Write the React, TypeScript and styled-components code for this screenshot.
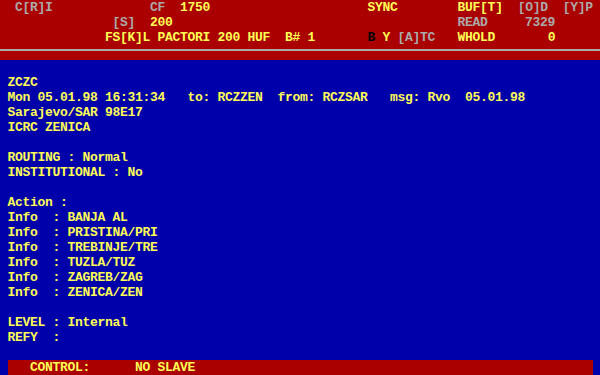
import React from "react";
import styled, { createGlobalStyle } from "styled-components";

const CELL = 7.5;
const ROW = 15;

const YELLOW = "#ffff55";
const GREY = "#aaaaaa";
const BLACK = "#000000";

const GlobalStyle = createGlobalStyle`
  html, body {
    margin: 0;
    padding: 0;
    background: #0000aa;
  }
`;

const Screen = styled.div`
  width: 600px;
  height: 375px;
  overflow: hidden;
  display: flex;
  flex-direction: column;
  background: #0000aa;
  color: ${YELLOW};
  font-family: "Liberation Mono", "DejaVu Sans Mono", monospace;
  font-weight: bold;
  font-size: 13px;
  letter-spacing: -0.3px;
  line-height: ${ROW}px;
`;

const TopBar = styled.header`
  background: #aa0000;
  display: flex;
  flex-direction: column;
`;

const Rule = styled.div`
  height: 2px;
  margin: 4px 0 9px;
  background: ${GREY};
`;

const Line = styled.div`
  height: ${ROW}px;
  white-space: pre;
`;

const Seg = styled.span<{ $color: string }>`
  color: ${p => p.$color};
`;

const Body = styled.main`
  flex: 1;
  padding: ${ROW}px 0 0 ${CELL}px;
`;

const StatusBar = styled.footer`
  height: ${ROW}px;
  margin: 0 ${CELL}px;
  background: #aa0000;
  display: flex;
`;

type Segment = { col: number; text: string; color?: string };

// lays text out on the 80 column grid by padding with spaces
const GridLine = ({ segments }: { segments: Segment[] }) => {
  let at = 0;
  return (
    <Line>
      {segments.map((s, i) => {
        const pad = " ".repeat(Math.max(0, s.col - at));
        at = s.col + s.text.length;
        return (
          <Seg key={i} $color={s.color || YELLOW}>
            {pad + s.text}
          </Seg>
        );
      })}
    </Line>
  );
};

const header: Segment[][] = [
  [
    { col: 2, text: "C[R]I", color: GREY },
    { col: 20, text: "CF", color: GREY },
    { col: 24, text: "1750" },
    { col: 49, text: "SYNC" },
    { col: 61, text: "BUF[T]" },
    { col: 69, text: "[O]D", color: GREY },
    { col: 75, text: "[Y]P", color: GREY }
  ],
  [
    { col: 15, text: "[S]", color: GREY },
    { col: 20, text: "200" },
    { col: 61, text: "READ", color: GREY },
    { col: 70, text: "7329", color: GREY }
  ],
  [
    { col: 14, text: "FS[K]L PACTORI 200 HUF  B# 1" },
    { col: 49, text: "B", color: BLACK },
    { col: 51, text: "Y" },
    { col: 53, text: "[A]TC", color: GREY },
    { col: 61, text: "WHOLD" },
    { col: 73, text: "0" }
  ]
];

const message = [
  "ZCZC",
  "Mon 05.01.98 16:31:34   to: RCZZEN  from: RCZSAR   msg: Rvo  05.01.98",
  "Sarajevo/SAR 98E17",
  "ICRC ZENICA",
  "",
  "ROUTING : Normal",
  "INSTITUTIONAL : No",
  "",
  "Action :",
  "Info  : BANJA AL",
  "Info  : PRISTINA/PRI",
  "Info  : TREBINJE/TRE",
  "Info  : TUZLA/TUZ",
  "Info  : ZAGREB/ZAG",
  "Info  : ZENICA/ZEN",
  "",
  "LEVEL : Internal",
  "REFY  :"
];

export default function App() {
  return (
    <>
      <GlobalStyle />
      <Screen>
        <TopBar>
          {header.map((row, i) => (
            <GridLine key={i} segments={row} />
          ))}
          <Rule />
        </TopBar>

        <Body>
          {message.map((text, i) => (
            <Line key={i}>{text}</Line>
          ))}
        </Body>

        <StatusBar>
          <GridLine
            segments={[
              { col: 3, text: "CONTROL:" },
              { col: 17, text: "NO SLAVE" }
            ]}
          />
        </StatusBar>
      </Screen>
    </>
  );
}
